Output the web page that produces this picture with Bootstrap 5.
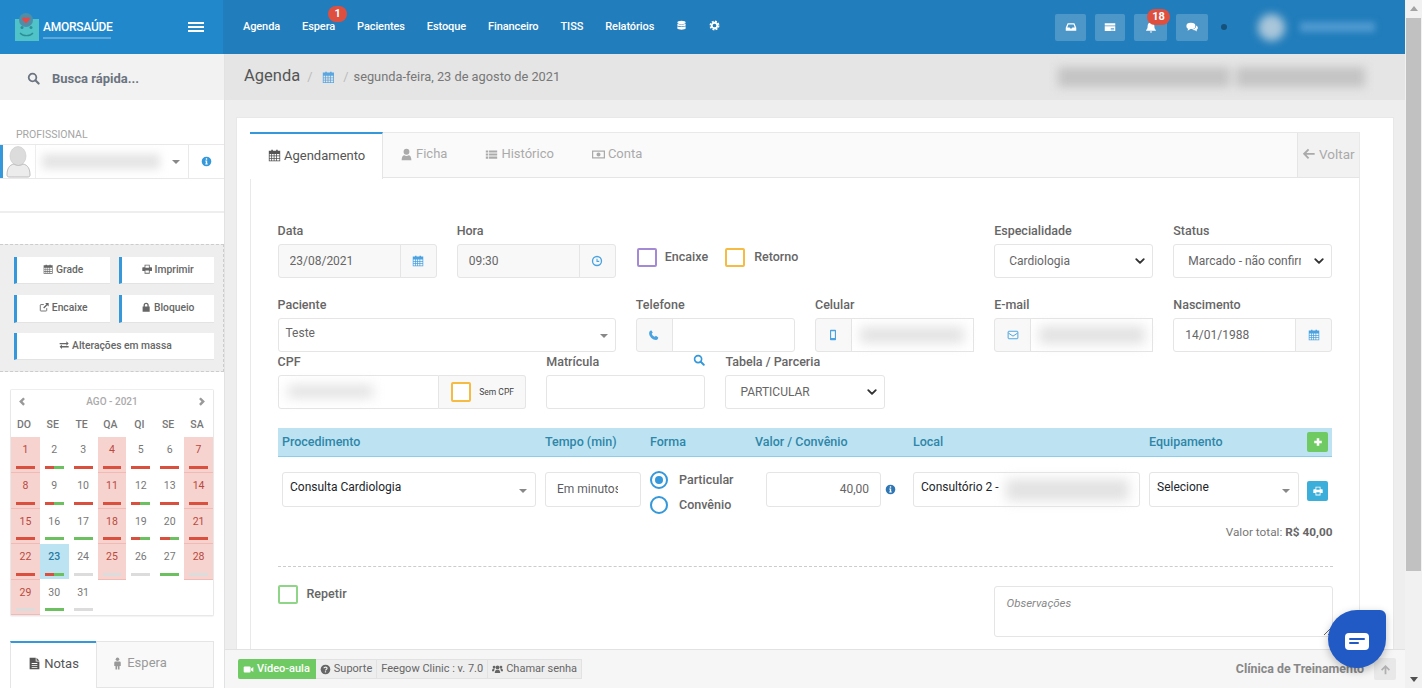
<!doctype html>
<html lang="pt-BR">
<head>
<meta charset="utf-8">
<title>Agenda</title>
<link href="https://cdn.jsdelivr.net/npm/bootstrap@5.3.0/dist/css/bootstrap.min.css" rel="stylesheet">
<style>
html,body{height:688px;overflow:hidden}
body{font-family:Roboto,"Liberation Sans",sans-serif;font-size:12px;color:#666;background:#eee}
.ic{width:1em;height:1em;fill:currentColor;display:inline-block;vertical-align:-.12em;flex:none}
.app{height:688px;width:1422px}
.pagewrap{width:1405px;min-width:0}
.bodyrow{min-height:0}
.sbar{width:17px;background:#f1f1f1;color:#505050}
.sbar-btn{height:17px;font-size:0}
.sbar-tri{width:0;height:0;border-left:4px solid transparent;border-right:4px solid transparent}
.sbar-tri.up{border-bottom:5px solid #a3a3a3}
.sbar-tri.dn{border-top:5px solid #505050}
.sbar-thumb{height:553px;margin:1px 1px 0;background:#c1c1c1}
.topbar{height:54px;background:#217dbb;color:#fff;flex:none}
.brand{width:223px;background:#2288cc;padding-left:15px;padding-right:19px}
.brandname{font-size:12px;font-weight:500;letter-spacing:-.25px;line-height:13px;padding-top:5px}
.brandsub{width:68px;height:2px;margin-top:3px;background:rgba(255,255,255,.28)}
.burger{width:16px;height:10px;border-top:2px solid #fff;border-bottom:2px solid #fff;position:relative}
.burger::after{content:"";display:block;height:2px;background:#fff;margin-top:2px}
.topnav{gap:22px;padding-left:20px}
.topnav a{color:#fff;text-decoration:none;font-size:11px;font-weight:500;position:relative;letter-spacing:-.1px}
.pill{position:absolute;background:#df4f3f;color:#fff;border-radius:9px;font-weight:700;font-size:11px;line-height:16px;text-align:center;height:16px;letter-spacing:0}
.pill-a{left:26px;top:-13px;width:19px}
.pill-b{left:13px;top:-5px;width:23px}
.topright{gap:9px;margin-right:30px}
.tbtn{height:27px;background:rgba(255,255,255,.2);border-radius:2px;color:#fff;font-size:12px;position:relative}
.w31{width:31px}.w30{width:30px}.w33{width:33px}.w32{width:32px}
.sdot{width:6px;height:6px;border-radius:50%;background:#14527c;margin-left:4px;margin-right:22px}
.blurav{width:27px;height:27px;border-radius:50%;background:#a9c6da;filter:blur(4px)}
.blurtx{width:75px;height:10px;margin-left:6px;background:#4f9ad0;filter:blur(3px)}
.side{width:225px;background:#fff;border-right:1px solid #e2e2e2;flex:none;overflow:hidden}
.busca{height:46px;background:#f2f2f2;padding:3px 0 0 27px;color:#6b7480;font-size:13px;font-weight:700;gap:12px}
.proflabel{font-size:10.5px;color:#a5a5a5;margin:29px 0 3px 16px;line-height:12px;height:12px}
.profsel{height:35px;border-bottom:1px solid #e9e9e9;border-top:1px solid #e9e9e9}
.profmain{width:188px;border-left:3px solid #3498db;position:relative;height:100%}
.avatar{width:33px;height:33px;border-right:1px solid #eee;flex:none;overflow:hidden}
.avatar svg{display:block;width:32px;height:34px}
.blurname{width:118px;height:15px;background:#e4e4e4;filter:blur(5px);margin-left:6px}
.caret-tri{width:0;height:0;border-left:4px solid transparent;border-right:4px solid transparent;border-top:4px solid #888;flex:none}
.profinfo{width:36px;border-left:1px solid #e9e9e9;color:#3498db;font-size:11px}
.sdiv{height:2px;background:#eee;margin-top:32px}
.actionbox{margin-top:31px;height:128px;background:#eee;border:1px dashed #ccc;border-left:0;border-right:1px dashed #ccc;padding:12px 9px 0 14px;gap:10.5px 9px;display:grid;grid-template-columns:1fr 1fr;grid-template-rows:27px 28px 27px}
.actbtn{--bs-btn-padding-y:0;--bs-btn-padding-x:0;background:#fff;border:0;border-left:3px solid #3498db;border-bottom:1px solid #e3e3e3;border-radius:0;font-size:10.3px;font-weight:500;color:#666;line-height:26px}
.actbtn:hover{background:#fff;color:#666}
.wide{grid-column:1 / 3}
.calwrap{margin:17px 10px 0;width:204px;height:227px;border:1px solid #e8e8e8;border-top:1px solid #eee;border-radius:2px;background:#fff;box-shadow:0 1px 1px rgba(0,0,0,.05)}
.calhead{height:22px;padding:0 5px;color:#aaa;font-size:10px;font-weight:500}
.chev{font-size:11px;color:#999}
.caltab{width:100%;table-layout:fixed;border-collapse:collapse;font-size:10.5px}
.caltab th{font-weight:500;text-align:center;height:25px;color:#777;font-size:10.5px;padding-right:4px}
.caltab td{height:35.6px;text-align:center;vertical-align:top;padding-top:5px;position:relative;color:#777;border-bottom:1px solid transparent}
.caltab td.wk{background:#f6d3cf;color:#b9493e;border-bottom-color:#f2bab4}
.caltab td.today{background:#bce3f2;color:#2a7ba0;font-weight:500}
.dbar{position:absolute;left:5px;right:5px;bottom:3px;height:3px}
.d-r{background:#d9503f}
.d-g{background:#6cc05f}
.d-x{background:#dcdcdc}
.d-m{background:linear-gradient(90deg,#d9503f 50%,#6cc05f 50%)}
.sidetabs{margin:25px 10px 0;height:47px;width:204px;border-top:1px solid #e5e5e5}
.stab-a{width:86px;background:#fff;border-top:2px solid #3498db;margin-top:-1px;border-left:1px solid #e5e5e5;font-size:13px;color:#555;gap:3px;padding-bottom:4px}
.stab-b{flex:1;background:#f9f9f9;border:1px solid #e5e5e5;border-top:0;font-size:13px;color:#999;gap:3px;padding:0 32px 3px 0}
.mainarea{min-width:0;background:#eee}
.crumb{height:46px;background:#e5e5e5;padding-left:19px;flex:none;color:#777;font-size:12.8px}
.crumb h1{font-size:16.5px;font-weight:400;margin:0;color:#555;position:relative;top:-1px}
.crumb .sl{color:#bbb;margin:0 5px 0 8px}
.crumb .sl1{margin:0 10px 0 7px}
.crumbcal{color:#5aa6e0}
.crumb-blur{width:323px;height:20px;margin-right:32px;gap:6px;padding:0 8px;filter:blur(5px)}
.crumb-blur i{display:block;height:100%;background:#c4c4c4}
.cb1{width:172px}.cb2{flex:1}
.scrollpart{min-height:0;overflow:hidden;padding:17px 11px 0}
.sheet{background:#fff;border:1px solid #e8e8e8;border-bottom:0;padding:14px 33px 0 13px;height:700px}
.ptabs{height:46px;background:#fafafa;border:1px solid #e9e9e9;border-bottom:1px solid #e5e5e5}
.ptab{font-size:13px;color:#aaa;gap:3px;height:100%}
.ptab.on{width:133px;margin:-1px 0 -1px -1px;height:47px;background:#fff;border-top:2px solid #3498db;border-right:1px solid #e5e5e5;color:#555;padding:0 0 2px 18px}
.ptab.off{padding:0 19px 2px}
.ptab.first{margin-left:-2px}
.voltar{width:62px;background:#f2f2f2;border-left:1px solid #e5e5e5;font-size:13.5px;color:#aaa;gap:3px;padding-bottom:2px}
.panelbody{border-left:1px solid #e9e9e9;border-right:1px solid #e9e9e9;height:600px;padding:45px 26.5px 0}
.frow{--bs-gutter-x:20px;--bs-gutter-y:0}
.lb{display:block;font-size:12.5px;font-weight:500;color:#666;line-height:14px;height:15px;padding-top:1px;margin-bottom:6px;box-sizing:border-box}
.lb2{height:14px;margin-bottom:11px}
.form-control,.form-select,.input-group-text,.fakesel{font-size:12px;color:#666;height:34px;border-color:#e5e5e5;border-radius:3px}
.form-control{padding:0 11px}
.form-control.ro{background:#f8f8f8}
.form-select{padding:0 30px 0 14px;box-shadow:none;background-image:url("data:image/svg+xml,%3csvg xmlns='http://www.w3.org/2000/svg' viewBox='0 0 16 16'%3e%3cpath fill='none' stroke='%23333' stroke-linecap='round' stroke-linejoin='round' stroke-width='3' d='m2 5 6 6 6-6'/%3e%3c/svg%3e");background-position:right 6px center;background-size:12px 10px}
.input-group-text{background:#f8f8f8;color:#4aa3e0;padding:0;width:37px;justify-content:center;font-size:12px}
.fakesel{border:1px solid #e5e5e5;padding:0 7px;background:#fff}
.fakesel>span:first-child{padding-bottom:5px}
.fakesel .caret-tri{margin-top:2px}
.igblur{position:relative}
.smudge{position:absolute;background:#e2e2e2;filter:blur(6px);z-index:6}
.sm-cpf{left:10px;width:85px;top:10px;height:13px}
.sm-cel{left:46px;right:10px;top:9px;height:16px}
.sm-mail{left:46px;right:8px;top:8px;height:18px}
.sm-local{left:92px;right:10px;top:6px;height:22px}
.checks{margin-left:1px}
.cbx{display:inline-block;width:20px;height:20px;border:2px solid;border-radius:2px;background:#fff;flex:none}
.checks .cbx,.rep .cbx{height:19px}
.cb-p{border-color:#a48ad4}.cb-o{border-color:#f6bb42}.cb-g{border-color:#8fd587}
.cblab{font-weight:500;color:#666;font-size:12.5px}
.cbgap{margin-right:17px}
.cbgap2{margin-left:9px}
.semcpf{width:87px;background:#f8f8f8;border:1px solid #e5e5e5;border-left:0;border-radius:0 3px 3px 0;gap:8px;padding-left:12px;font-size:8.5px;color:#444;height:34px;flex:none}
.mt-row2{margin-top:19px}
.mt-row3{margin-top:2px}
.lupa{color:#3498db;font-size:12px;position:absolute;right:10px;top:0}
.relbox{position:relative}
.proctab{--bs-table-bg:transparent;width:1054px;table-layout:fixed;margin:19px 0 0 .5px;border-collapse:collapse}
.proctab th{background:#bde3f2;color:#2e86a8;font-weight:500;font-size:12.5px;height:28px;padding:2px 0 0 5px;border-bottom:1px solid #8ccdea;vertical-align:middle;box-shadow:none}
.proctab td{border:0;padding:15px 0 0 5px;vertical-align:top;height:60px;box-shadow:none}
.proctab .tn{padding-left:4px}
.proctab th.tb{padding-top:0}
.proctab td.rc{padding-top:11px}
.proctab .tdp{padding-right:4px}
.c1{width:262px}.c2{width:105px}.c3{width:105px}.c4{width:158px}.c5{width:236px}.c6{width:159px}.c7{width:29px}
.h35{height:35px}
.clipin{padding-right:22px}
.valin{width:115px;flex:none;margin-left:11px}
.valinfo{color:#2f76b5;font-size:11px;margin-left:4px}
.fs2{height:35px;border:1px solid #e5e5e5;border-radius:3px;padding:0 7px;background:#fff;font-size:12px}
.fs2>span:first-child{padding-bottom:4px}
.fs2 .caret-tri{margin-left:auto;margin-right:1px;margin-top:3px}
.radrow{height:25px;gap:11px;font-weight:500;color:#666;font-size:12.5px}
.rad{width:18px;height:18px;border-radius:50%;border:2px solid #3498db;flex:none;background:#fff;position:relative}
.rad.sel::after{content:"";position:absolute;inset:3px;background:#3498db;border-radius:50%}
.minibtn{width:21px;height:20px;border-radius:2px;color:#fff;font-size:10px;padding:0;border:0}
.mb-g,.mb-g:hover{background:#70ca63;color:#fff}
.mb-b,.mb-b:hover{background:#3bafda;color:#fff;margin-top:9px}
.total{text-align:right;font-size:11.8px;color:#777;line-height:14px;margin-top:7px}
.total b{font-weight:700;color:#666}
.dash{border-top:1px dashed #ccc;margin-top:27px}
.obs{width:339px;height:51px;font-size:11.5px;font-style:italic;padding:8px 12px;resize:both}
.obs::placeholder{color:#888}
.lastrow{margin-top:19px}
.rep{gap:9px;height:18px}
.ftr{height:39px;background:#f6f6f6;border-top:1px solid #e2e2e2;flex:none;padding:0 9px 0 13px;position:relative;z-index:3}
.fbtn{height:20px;background:#eee;border:1px solid #e2e2e2;border-left:0;font-size:11px;color:#666;padding:0 4px;gap:3px;white-space:nowrap}
.fbtn.green{background:#70ca63;color:#fff;border-color:#70ca63;border-radius:2px 0 0 2px;padding:0 5px;font-weight:500}
.clin{font-size:12.4px;font-weight:700;color:#888;margin-right:10px}
.upbtn{width:22px;height:22px;background:#e8e8e8;border-radius:2px;color:#b0b0b0;font-size:11px}
.chatw{position:absolute;left:1328px;top:610px;width:58px;height:58px;background:#2159c5;border-radius:50% 6px 50% 50%;box-shadow:0 3px 8px rgba(0,0,0,.25);z-index:9}
.chatb{width:24px;height:17px;background:#fff;border-radius:4px;padding:5px 4px 0;margin-top:4px}
.chatb i{display:block;height:2px;background:#2159c5;margin-bottom:2px;border-radius:1px}
.chatb i:last-child{width:10px}
.logo{width:24px;height:28px;font-size:28px;flex:none}
</style>
</head>
<body>
<svg width="0" height="0" class="position-absolute">
<defs>
<symbol id="i-cal" viewBox="0 0 16 16"><path fill-rule="evenodd" d="M4 1h2v1h4V1h2v1h3v13H1V2h3zM2 6v2h2V6zm3 0v2h2V6zm3 0v2h2V6zm3 0v2h3V6zM2 9v2h2V9zm3 0v2h2V9zm3 0v2h2V9zm3 0v2h3V9zM2 12v2h2v-2zm3 0v2h2v-2zm3 0v2h2v-2zm3 0v2h3v-2z"/></symbol>
<symbol id="i-user" viewBox="0 0 16 16"><path d="M8 1a3.600 3.600 0 110 7.200A3.600 3.600 0 018 1zM2 15c0-4 1.500-6.200 3.400-6.200.7.6 1.600 1 2.600 1s1.900-.4 2.600-1C12.500 8.800 14 11 14 15z"/></symbol>
<symbol id="i-list" viewBox="0 0 16 16"><path d="M1 3h3v2.500H1zM5 3h10v2.500H5zM1 6.800h3v2.500H1zM5 6.800h10v2.500H5zM1 10.600h3v2.500H1zM5 10.600h10v2.500H5z"/></symbol>
<symbol id="i-money" viewBox="0 0 16 16"><path fill-rule="evenodd" d="M0 3h16v10H0zM1.500 4.500v7h13v-7zM8 5.500a2.500 2.500 0 110 5 2.500 2.500 0 010-5z"/></symbol>
<symbol id="i-left" viewBox="0 0 16 16"><path d="M7 2l1.600 1.600L5.200 7H15v2.200H5.200l3.400 3.400L7 14.200 1 8.100z"/></symbol>
<symbol id="i-search" viewBox="0 0 16 16"><circle cx="6.800" cy="6.800" r="4.700" fill="none" stroke="currentColor" stroke-width="2.200"/><path d="M10.300 10.300l4 4" stroke="currentColor" stroke-width="2.600" stroke-linecap="round"/></symbol>
<symbol id="i-info" viewBox="0 0 16 16"><path fill-rule="evenodd" d="M8 1a7 7 0 110 14A7 7 0 018 1zM7 3.300v2h2v-2zM6.200 6.600v1.300H7v3H6.200v1.300h3.600v-1.300H9V6.600z"/></symbol>
<symbol id="i-inbox" viewBox="0 0 16 16"><path fill-rule="evenodd" d="M3.500 3h9L15 9v4H1V9zM4.500 4.500L3 8.500h3.200l.8 1.500h2l.8-1.500H13l-1.500-4z"/></symbol>
<symbol id="i-card" viewBox="0 0 16 16"><path d="M1 3h14v3H1zM1 7h14v6.200H1z"/><path d="M9 10h4.500M9 11.800h4.500" stroke="#5a9fd0" stroke-width="1"/></symbol>
<symbol id="i-bell" viewBox="0 0 16 16"><path d="M8 1c.6 0 1 .4 1 1 2.500.5 3.500 2.500 3.500 5 0 3 1 4 2 5v1h-13v-1c1-1 2-2 2-5 0-2.500 1-4.500 3.500-5 0-.6.400-1 1-1zM6.500 14h3a1.500 1.500 0 01-3 0z"/></symbol>
<symbol id="i-com" viewBox="0 0 16 16"><ellipse cx="6.500" cy="6.500" rx="6" ry="4.300"/><path d="M3 9.500L2 13l4-2.500z"/><path d="M13.500 6c1.500.8 2.300 1.900 2.300 3.100 0 1.200-.8 2.200-1.800 2.800l.8 2-3-1.500c-1.500.1-3-.3-4-1 3.500 0 6-2.500 5.700-5.400z"/></symbol>
<symbol id="i-db" viewBox="0 0 16 16"><ellipse cx="8" cy="3.500" rx="6" ry="2.500"/><path d="M2 5.500C3 7 13 7 14 5.500V8c-1 1.800-11 1.800-12 0zM2 9.200c1 1.500 11 1.500 12 0v3.300c-1 2.200-11 2.200-12 0z"/></symbol>
<symbol id="i-cog" viewBox="0 0 16 16"><circle cx="8" cy="8" r="4" fill="none" stroke="currentColor" stroke-width="2.600"/><circle cx="8" cy="8" r="6" fill="none" stroke="currentColor" stroke-width="2.400" stroke-dasharray="2.800 1.900"/></symbol>
<symbol id="i-clock" viewBox="0 0 16 16"><circle cx="8" cy="8" r="6" fill="none" stroke="currentColor" stroke-width="1.800"/><path d="M8 5v3.500h3" fill="none" stroke="currentColor" stroke-width="1.400"/></symbol>
<symbol id="i-phone" viewBox="0 0 16 16"><path d="M4.300 1.500l2 3.300-1.300 1.500c.6 1.800 2.300 3.500 4.100 4.100l1.500-1.300 3.100 2.100c0 1.500-1.200 3.300-3 3.300C6.200 14.500 1.500 10 1.500 5.500c0-2 1.200-3.500 2.800-4z"/></symbol>
<symbol id="i-mob" viewBox="0 0 16 16"><path fill-rule="evenodd" d="M5 1h6a1 1 0 011 1v12a1 1 0 01-1 1H5a1 1 0 01-1-1V2a1 1 0 011-1zM5.500 3v9h5V3z"/></symbol>
<symbol id="i-env" viewBox="0 0 16 16"><rect x="1.500" y="3" width="13" height="10" rx="1" fill="none" stroke="currentColor" stroke-width="1.300"/><path d="M2 5.500L8 9.500l6-4" fill="none" stroke="currentColor" stroke-width="1.300"/></symbol>
<symbol id="i-print" viewBox="0 0 16 16"><path fill-rule="evenodd" d="M4 1h8v4h2.500a1 1 0 011 1v5H12v4H4v-4H.5V6a1 1 0 011-1H4zM5.300 2.300V6h5.400V2.300zM5.300 10v3.700h5.400V10z"/></symbol>
<symbol id="i-ext" viewBox="0 0 16 16"><path d="M12 9.500V13a1 1 0 01-1 1H3a1 1 0 01-1-1V5a1 1 0 011-1h4.500" fill="none" stroke="currentColor" stroke-width="1.400"/><path d="M9.500 1.500H15v5.500l-2-2-5 5-1.500-1.500 5-5z"/></symbol>
<symbol id="i-lock" viewBox="0 0 16 16"><path fill-rule="evenodd" d="M8 1a4 4 0 014 4v2h1.500v8h-11V7H4V5a4 4 0 014-4zM6 7h4V5a2 2 0 00-4 0z"/></symbol>
<symbol id="i-exch" viewBox="0 0 16 16"><path d="M1 4.500h10.500V2l3.500 3.500L11.500 9V6.500H1zM15 9.500H4.500V7L1 10.500 4.500 14v-2.500H15z"/></symbol>
<symbol id="i-file" viewBox="0 0 16 16"><path fill-rule="evenodd" d="M2 1h7.500v4.500H14V15H2zM4.500 7.500v1h7v-1zM4.500 10v1h7v-1zM4.500 12.500v1h7v-1zM10.500 1L14 4.500h-3.500z"/></symbol>
<symbol id="i-male" viewBox="0 0 16 16"><circle cx="8" cy="2.800" r="2.200"/><path d="M5.500 5.500h5a1.500 1.500 0 011.500 1.500v4h-1.500v4.500H8.500v-4h-1v4H5.500V11H4V7a1.500 1.500 0 011.500-1.500z"/></symbol>
<symbol id="i-video" viewBox="0 0 16 16"><rect x="1" y="3.500" width="10" height="9" rx="1.500"/><path d="M11.500 7L15 4.500v7L11.500 9z"/></symbol>
<symbol id="i-q" viewBox="0 0 16 16"><circle cx="8" cy="8" r="7"/><path d="M5.800 6.300C5.800 3.800 10.300 3.800 10.300 6.300c0 1.700-2.300 1.700-2.300 3.200" fill="none" stroke="#eee" stroke-width="1.700"/><rect x="7.100" y="10.500" width="1.800" height="1.800" fill="#eee"/></symbol>
<symbol id="i-users" viewBox="0 0 16 16"><circle cx="8" cy="5" r="2.800"/><circle cx="3" cy="4.500" r="2"/><circle cx="13" cy="4.500" r="2"/><path d="M4 13c0-3 1.500-4.800 2.500-4.800h3C10.500 8.200 12 10 12 13zM0 10c0-2 1-3.500 2-3.500h2.200C3.500 7.500 3 8.800 3 10.500H0zM16 10c0-2-1-3.500-2-3.500h-2.200c.7 1 1.200 2.300 1.200 4h3z"/></symbol>
<symbol id="i-up" viewBox="0 0 16 16"><path d="M8 1.500l6.500 6.500-1.700 1.700-3.500-3.500V15H6.700V6.200L3.200 9.700 1.500 8z"/></symbol>
<symbol id="i-plus" viewBox="0 0 16 16"><path d="M6 2h4v4h4v4h-4v4H6v-4H2V6h4z"/></symbol>
<symbol id="i-cl" viewBox="0 0 16 16"><path d="M10.500 2L13 4.500 9.500 8l3.500 3.500-2.500 2.500-6-6z"/></symbol>
<symbol id="i-cr" viewBox="0 0 16 16"><path d="M5.500 2L3 4.500 6.500 8 3 11.500 5.500 14l6-6z"/></symbol>
<symbol id="i-av" viewBox="0 0 32 34"><ellipse cx="15" cy="11" rx="8" ry="9.500" fill="#dcdcdc" stroke="#c9c9c9" stroke-width=".6"/><path d="M4 30c0-6 2-10 7-11 3 2 6 2 9 0 5 1 7 5 7 11 0 1.500-1 2-2 2H6c-1 0-2-.5-2-2z" fill="#ececec" stroke="#bdbdbd"/></symbol>
<symbol id="i-logo" viewBox="0 0 24 28"><path d="M0 6h24v22H0z" fill="#4fc3c7"/><circle cx="11" cy="7" r="7" fill="#4d8fa8"/><path d="M11 10.500L7.500 7c-1.500-2.500 2-4 3.500-1.800C12.500 3 16 4.500 14.500 7z" fill="#e24a4a"/><circle cx="7" cy="14.500" r="1.500" fill="#2d8f96"/><circle cx="16" cy="14.500" r="1.500" fill="#2d8f96"/><path d="M5 20c3 3.500 10 3.500 13 0" fill="none" stroke="#2d8f96" stroke-width="1.300"/></symbol>
</defs>
</svg>

<div class="app d-flex">
<div class="pagewrap d-flex flex-column">
  <header class="topbar d-flex">
    <div class="brand d-flex align-items-center">
      <svg class="ic logo"><use href="#i-logo"/></svg>
      <div class="ms-1"><div class="brandname">AMORSAÚDE</div><div class="brandsub"></div></div>
      <div class="burger ms-auto"></div>
    </div>
    <nav class="topnav d-flex align-items-center flex-grow-1">
      <a href="#">Agenda</a>
      <a href="#">Espera<span class="pill pill-a">1</span></a>
      <a href="#">Pacientes</a>
      <a href="#">Estoque</a>
      <a href="#">Financeiro</a>
      <a href="#">TISS</a>
      <a href="#">Relatórios</a>
      <a href="#"><svg class="ic"><use href="#i-db"/></svg></a>
      <a href="#"><svg class="ic"><use href="#i-cog"/></svg></a>
    </nav>
    <div class="topright d-flex align-items-center">
      <div class="tbtn w31 d-flex align-items-center justify-content-center"><svg class="ic"><use href="#i-inbox"/></svg></div>
      <div class="tbtn w30 d-flex align-items-center justify-content-center"><svg class="ic"><use href="#i-card"/></svg></div>
      <div class="tbtn w33 d-flex align-items-center justify-content-center"><svg class="ic"><use href="#i-bell"/></svg><span class="pill pill-b">18</span></div>
      <div class="tbtn w32 d-flex align-items-center justify-content-center"><svg class="ic"><use href="#i-com"/></svg></div>
      <div class="sdot"></div>
      <div class="blurav"></div>
      <div class="blurtx"></div>
    </div>
  </header>
  <div class="bodyrow d-flex flex-grow-1">
    <aside class="side">
      <div class="busca d-flex align-items-center"><svg class="ic"><use href="#i-search"/></svg><span>Busca rápida...</span></div>
      <div class="proflabel">PROFISSIONAL</div>
      <div class="profsel d-flex">
        <div class="profmain d-flex align-items-center">
          <div class="avatar"><svg class="ic"><use href="#i-av"/></svg></div>
          <div class="blurname"></div>
          <div class="caret-tri ms-auto me-2"></div>
        </div>
        <div class="profinfo flex-grow-1 d-flex align-items-center justify-content-center"><svg class="ic"><use href="#i-info"/></svg></div>
      </div>
      <div class="sdiv"></div>
      <div class="actionbox">
        <button class="btn actbtn"><svg class="ic"><use href="#i-cal"/></svg> Grade</button>
        <button class="btn actbtn"><svg class="ic"><use href="#i-print"/></svg> Imprimir</button>
        <button class="btn actbtn"><svg class="ic"><use href="#i-ext"/></svg> Encaixe</button>
        <button class="btn actbtn"><svg class="ic"><use href="#i-lock"/></svg> Bloqueio</button>
        <button class="btn actbtn wide"><svg class="ic"><use href="#i-exch"/></svg> Alterações em massa</button>
      </div>
      <div class="calwrap">
        <div class="calhead d-flex align-items-center justify-content-between"><svg class="ic chev"><use href="#i-cl"/></svg><span>AGO - 2021</span><svg class="ic chev"><use href="#i-cr"/></svg></div>
        <table class="caltab">
          <thead><tr><th>DO</th><th>SE</th><th>TE</th><th>QA</th><th>QI</th><th>SE</th><th>SA</th></tr></thead>
          <tbody>
            <tr><td class="wk">1<span class="dbar d-r"></span></td><td>2<span class="dbar d-m"></span></td><td>3<span class="dbar d-r"></span></td><td class="wk">4<span class="dbar d-r"></span></td><td>5<span class="dbar d-r"></span></td><td>6<span class="dbar d-r"></span></td><td class="wk">7<span class="dbar d-r"></span></td></tr>
            <tr><td class="wk">8<span class="dbar d-r"></span></td><td>9<span class="dbar d-m"></span></td><td>10<span class="dbar d-r"></span></td><td class="wk">11<span class="dbar d-r"></span></td><td>12<span class="dbar d-m"></span></td><td>13<span class="dbar d-r"></span></td><td class="wk">14<span class="dbar d-r"></span></td></tr>
            <tr><td class="wk">15<span class="dbar d-r"></span></td><td>16<span class="dbar d-g"></span></td><td>17<span class="dbar d-g"></span></td><td class="wk">18<span class="dbar d-r"></span></td><td>19<span class="dbar d-m"></span></td><td>20<span class="dbar d-m"></span></td><td class="wk">21<span class="dbar d-r"></span></td></tr>
            <tr><td class="wk">22<span class="dbar d-r"></span></td><td class="today">23<span class="dbar d-m"></span></td><td>24<span class="dbar d-x"></span></td><td class="wk">25<span class="dbar d-x"></span></td><td>26<span class="dbar d-x"></span></td><td>27<span class="dbar d-g"></span></td><td class="wk">28<span class="dbar d-x"></span></td></tr>
            <tr><td class="wk">29<span class="dbar d-x"></span></td><td>30<span class="dbar d-g"></span></td><td>31<span class="dbar d-x"></span></td><td></td><td></td><td></td><td></td></tr>
          </tbody>
        </table>
      </div>
      <div class="sidetabs d-flex">
        <div class="stab-a d-flex align-items-center justify-content-center"><svg class="ic"><use href="#i-file"/></svg>Notas</div>
        <div class="stab-b d-flex align-items-center justify-content-center"><svg class="ic"><use href="#i-male"/></svg>Espera</div>
      </div>
    </aside>
    <main class="mainarea flex-grow-1 d-flex flex-column">
      <div class="crumb d-flex align-items-center">
        <h1>Agenda</h1><span class="sl sl1">/</span><svg class="ic crumbcal"><use href="#i-cal"/></svg><span class="sl">/</span><span>segunda-feira, 23 de agosto de 2021</span>
        <div class="crumb-blur ms-auto d-flex"><i class="cb1"></i><i class="cb2"></i></div>
      </div>
      <div class="scrollpart flex-grow-1">
        <div class="sheet">
          <div class="ptabs d-flex">
            <div class="ptab on d-flex align-items-center"><svg class="ic"><use href="#i-cal"/></svg>Agendamento</div>
            <div class="ptab off first d-flex align-items-center"><svg class="ic"><use href="#i-user"/></svg>Ficha</div>
            <div class="ptab off d-flex align-items-center"><svg class="ic"><use href="#i-list"/></svg>Histórico</div>
            <div class="ptab off d-flex align-items-center"><svg class="ic"><use href="#i-money"/></svg>Conta</div>
            <div class="voltar ms-auto d-flex align-items-center justify-content-center"><svg class="ic"><use href="#i-left"/></svg>Voltar</div>
          </div>
          <div class="panelbody">
            <div class="row frow">
              <div class="col-2"><label class="lb">Data</label>
                <div class="input-group"><input class="form-control ro" value="23/08/2021"><span class="input-group-text"><svg class="ic"><use href="#i-cal"/></svg></span></div></div>
              <div class="col-2"><label class="lb">Hora</label>
                <div class="input-group"><input class="form-control ro" value="09:30"><span class="input-group-text"><svg class="ic"><use href="#i-clock"/></svg></span></div></div>
              <div class="col-4"><div class="lb2"></div>
                <div class="checks d-flex align-items-center">
                  <span class="cbx cb-p"></span><span class="cblab ms-2 cbgap">Encaixe</span>
                  <span class="cbx cb-o"></span><span class="cblab cbgap2">Retorno</span>
                </div></div>
              <div class="col-2"><label class="lb">Especialidade</label>
                <select class="form-select"><option>Cardiologia</option></select></div>
              <div class="col-2"><label class="lb">Status</label>
                <select class="form-select"><option>Marcado - não confirmado</option></select></div>
            </div>
            <div class="row frow mt-row2">
              <div class="col-4"><label class="lb">Paciente</label>
                <div class="fakesel d-flex align-items-center"><span>Teste</span><span class="caret-tri ms-auto"></span></div></div>
              <div class="col-2"><label class="lb">Telefone</label>
                <div class="input-group"><span class="input-group-text"><svg class="ic"><use href="#i-phone"/></svg></span><input class="form-control"></div></div>
              <div class="col-2"><label class="lb">Celular</label>
                <div class="input-group igblur"><span class="input-group-text"><svg class="ic"><use href="#i-mob"/></svg></span><input class="form-control"><span class="smudge sm-cel"></span></div></div>
              <div class="col-2"><label class="lb">E-mail</label>
                <div class="input-group igblur"><span class="input-group-text"><svg class="ic"><use href="#i-env"/></svg></span><input class="form-control"><span class="smudge sm-mail"></span></div></div>
              <div class="col-2"><label class="lb">Nascimento</label>
                <div class="input-group"><input class="form-control" value="14/01/1988"><span class="input-group-text"><svg class="ic"><use href="#i-cal"/></svg></span></div></div>
            </div>
            <div class="row frow mt-row3">
              <div class="col-3"><label class="lb">CPF</label>
                <div class="d-flex igblur"><input class="form-control rounded-end-0"><span class="smudge sm-cpf"></span><div class="semcpf d-flex align-items-center"><span class="cbx cb-o"></span><span>Sem CPF</span></div></div></div>
              <div class="col-2 relbox"><label class="lb">Matrícula</label><svg class="ic lupa"><use href="#i-search"/></svg>
                <input class="form-control"></div>
              <div class="col-2"><label class="lb">Tabela / Parceria</label>
                <select class="form-select"><option>PARTICULAR</option></select></div>
            </div>
            <table class="table proctab">
              <colgroup><col class="c1"><col class="c2"><col class="c3"><col class="c4"><col class="c5"><col class="c6"><col class="c7"></colgroup>
              <thead><tr><th class="tn">Procedimento</th><th>Tempo (min)</th><th>Forma</th><th>Valor / Convênio</th><th>Local</th><th>Equipamento</th><th class="tn tb"><button class="btn minibtn mb-g d-flex align-items-center justify-content-center"><svg class="ic"><use href="#i-plus"/></svg></button></th></tr></thead>
              <tbody><tr>
                <td class="tn tdp"><div class="fs2 d-flex align-items-center"><span>Consulta Cardiologia</span><span class="caret-tri"></span></div></td>
                <td class="tdp"><input class="form-control h35 clipin" placeholder="Em minutos"></td>
                <td class="rc"><div class="radrow d-flex align-items-center"><span class="rad sel"></span>Particular</div><div class="radrow d-flex align-items-center"><span class="rad"></span>Convênio</div></td>
                <td><div class="d-flex align-items-center"><input class="form-control h35 text-end valin" value="40,00"><svg class="ic valinfo"><use href="#i-info"/></svg></div></td>
                <td class="tdp"><div class="fs2 d-flex align-items-center igblur"><span>Consultório 2 -</span><span class="smudge sm-local"></span></div></td>
                <td class="tdp"><div class="fs2 d-flex align-items-center"><span>Selecione</span><span class="caret-tri"></span></div></td>
                <td class="tn"><button class="btn minibtn mb-b d-flex align-items-center justify-content-center"><svg class="ic"><use href="#i-print"/></svg></button></td>
              </tr></tbody>
            </table>
            <div class="total">Valor total: <b>R$ 40,00</b></div>
            <div class="dash"></div>
            <div class="lastrow d-flex justify-content-between">
              <div class="rep d-flex align-items-center"><span class="cbx cb-g"></span><span class="cblab">Repetir</span></div>
              <textarea class="form-control obs" placeholder="Observações"></textarea>
            </div>
          </div>
        </div>
      </div>
      <footer class="ftr d-flex align-items-center">
        <div class="d-flex">
          <div class="fbtn green d-flex align-items-center"><svg class="ic"><use href="#i-video"/></svg>Vídeo-aula</div>
          <div class="fbtn d-flex align-items-center"><svg class="ic"><use href="#i-q"/></svg>Suporte</div>
          <div class="fbtn d-flex align-items-center">Feegow Clinic : v. 7.0</div>
          <div class="fbtn d-flex align-items-center"><svg class="ic"><use href="#i-users"/></svg>Chamar senha</div>
        </div>
        <div class="clin ms-auto">Clínica de Treinamento</div>
        <div class="upbtn d-flex align-items-center justify-content-center"><svg class="ic"><use href="#i-up"/></svg></div>
      </footer>
    </main>
  </div>
</div>
<div class="sbar d-flex flex-column">
  <div class="sbar-btn d-flex align-items-center justify-content-center"><span class="sbar-tri up"></span></div>
  <div class="sbar-thumb"></div>
  <div class="sbar-btn mt-auto d-flex align-items-center justify-content-center"><span class="sbar-tri dn"></span></div>
</div>
</div>
<div class="chatw d-flex align-items-center justify-content-center"><div class="chatb"><i></i><i></i></div></div>
<script src="https://cdn.jsdelivr.net/npm/bootstrap@5.3.0/dist/js/bootstrap.bundle.min.js"></script>
</body>
</html>
